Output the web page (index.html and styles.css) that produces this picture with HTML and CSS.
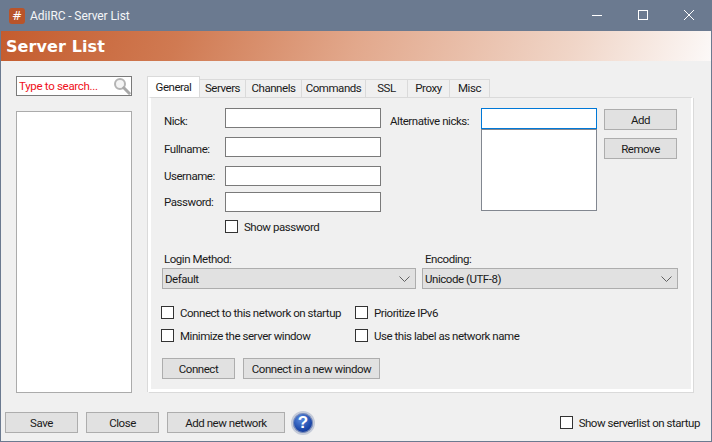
FILE: index.html
```html
<!DOCTYPE html>
<html lang="en">
<head>
<meta charset="utf-8">
<title>AdiIRC - Server List</title>
<link rel="stylesheet" href="styles.css">
</head>
<body>
<div class="window">
  <header class="titlebar">
    <span class="app-icon">#</span>
    <span class="title">AdiIRC - Server List</span>
    <div class="controls">
      <svg class="ctl" width="46" height="31" viewBox="0 0 46 31"><path d="M18 15.5h10" stroke="#fff" fill="none"/></svg>
      <svg class="ctl" width="46" height="31" viewBox="0 0 46 31"><rect x="18.5" y="10.5" width="9" height="9" stroke="#fff" fill="none"/></svg>
      <svg class="ctl" width="46" height="31" viewBox="0 0 46 31"><path d="M18 10l10 10M28 10L18 20" stroke="#fff" fill="none"/></svg>
    </div>
  </header>
  <div class="banner">Server List</div>
  <main class="content">
    <div class="main-row">
      <aside class="sidebar">
        <div class="search">
          <span class="search-text">Type to search...</span>
          <svg width="18" height="18" viewBox="0 0 18 18"><circle cx="7" cy="7" r="5" fill="#f4f4f4" stroke="#b4b4b4" stroke-width="2"/><path d="M10.8 10.8l5.4 5.4" stroke="#a8a8a8" stroke-width="3" stroke-linecap="round"/></svg>
        </div>
        <div class="network-list"></div>
      </aside>
      <section class="tabs">
        <nav class="tabstrip">
          <span class="tab active">General</span>
          <span class="tab t-servers">Servers</span>
          <span class="tab t-channels">Channels</span>
          <span class="tab t-commands">Commands</span>
          <span class="tab t-ssl">SSL</span>
          <span class="tab t-proxy">Proxy</span>
          <span class="tab t-misc">Misc</span>
        </nav>
        <div class="panel">
          <div class="top-grid">
            <label class="lbl l1">Nick:</label>
            <input class="field f1" type="text">
            <label class="lbl l2">Fullname:</label>
            <input class="field f2" type="text">
            <label class="lbl l3">Username:</label>
            <input class="field f3" type="text">
            <label class="lbl l4">Password:</label>
            <input class="field f4" type="text">
            <label class="check c5"><span class="box"></span>Show password</label>
            <label class="lbl alt-label">Alternative nicks:</label>
            <div class="alt">
              <div class="alt-input"></div>
              <div class="alt-list"></div>
            </div>
            <div class="alt-buttons">
              <button class="btn btn-add">Add</button>
              <button class="btn btn-add">Remove</button>
            </div>
          </div>
          <div class="selects">
            <div class="select-col col-login">
              <label class="lbl">Login Method:</label>
              <div class="select"><span>Default</span>
                <svg width="11" height="6" viewBox="0 0 11 6"><path d="M.5.5l5 5 5-5" stroke="#606060" fill="none"/></svg>
              </div>
            </div>
            <div class="select-col col-enc">
              <label class="lbl">Encoding:</label>
              <div class="select"><span>Unicode (UTF-8)</span>
                <svg width="11" height="6" viewBox="0 0 11 6"><path d="M.5.5l5 5 5-5" stroke="#606060" fill="none"/></svg>
              </div>
            </div>
          </div>
          <div class="options">
            <label class="check"><span class="box"></span>Connect to this network on startup</label>
            <label class="check"><span class="box"></span>Prioritize IPv6</label>
            <label class="check"><span class="box"></span>Minimize the server window</label>
            <label class="check"><span class="box"></span>Use this label as network name</label>
          </div>
          <div class="panel-actions">
            <button class="btn w73">Connect</button>
            <button class="btn w137">Connect in a new window</button>
          </div>
        </div>
      </section>
    </div>
    <footer class="footer">
      <button class="btn w73">Save</button>
      <button class="btn w73">Close</button>
      <button class="btn w118">Add new network</button>
      <span class="help"><span class="help-mark">?</span></span>
      <label class="check startup"><span class="box"></span>Show serverlist on startup</label>
    </footer>
  </main>
</div>
</body>
</html>
```

FILE: styles.css
```css
* { box-sizing: border-box; }
html, body { margin: 0; padding: 0; }
body {
  width: 712px;
  height: 442px;
  overflow: hidden;
  font-family: Roboto, "Noto Sans", sans-serif;
  font-size: 11.5px;
  letter-spacing: -0.46px;
  color: #1a1a1a;
  background: #f0f0f0;
}
.window {
  width: 712px;
  height: 442px;
  display: flex;
  flex-direction: column;
  border: 1px solid #6b7a90;
  border-top: 0;
}
.titlebar {
  height: 31px;
  margin: 0 -1px;
  flex: none;
  background: #6b7a90;
  display: flex;
  align-items: center;
  color: #fff;
  padding-left: 9px;
}
.app-icon {
  width: 16px;
  height: 16px;
  border-radius: 3px;
  background: #b9542a;
  color: #fff;
  font: 12px/16px "DejaVu Sans", sans-serif;
  letter-spacing: 0;
  text-align: center;
}
.title {
  margin-left: 5px;
  font-size: 12px;
  letter-spacing: -0.1px;
  color: #f4f6f8;
}
.controls { margin-left: auto; display: flex; }
.ctl { display: block; }
.banner {
  height: 30px;
  flex: none;
  padding: 1px 0 0 5px;
  font: bold 16px/30px "DejaVu Sans", sans-serif;
  letter-spacing: 0.1px;
  color: #fff;
  background: linear-gradient(110deg, #c45c2e 0%, #d07a52 25%, #e2a88c 50%, #f0d5c7 80%, #fcf9f8 100%);
}
.content { flex: 1; display: flex; flex-direction: column; min-height: 0; }
.main-row { display: flex; height: 332px; padding: 15px 0 0 15px; }
.sidebar { width: 116px; flex: none; margin-right: 15px; }
.search {
  height: 20px;
  border: 1px solid #7a7a7a;
  background: #fff;
  display: flex;
  align-items: center;
  justify-content: space-between;
  padding: 0 0 0 2px;
  color: #f01020;
  letter-spacing: -0.3px;
}
.network-list {
  margin-top: 15px;
  height: 282px;
  background: #fff;
  border: 1px solid #ababab;
}
.tabs { width: 547px; flex: none; }
.tabstrip { display: flex; height: 21px; align-items: flex-end; }
.tab {
  height: 18px;
  border: 1px solid #dadada;
  border-left: 0;
  border-bottom: 0;
  background: #f0f0f0;
  text-align: center;
  line-height: 17px;
  white-space: nowrap;
}
.tab.active {
  width: 53px;
  height: 21px;
  border: 1px solid #dadada;
  border-bottom: 0;
  background: #fff;
  line-height: 20px;
}
.t-servers { width: 46px; }
.t-channels { width: 56px; }
.t-commands { width: 64px; }
.t-ssl { width: 42px; }
.t-proxy { width: 42px; }
.t-misc { width: 40px; }
.panel {
  height: 295px;
  width: 545px;
  margin-left: 1px;
  border-top: 1px solid #dadada;
  border-left: 3px solid #fff;
  border-bottom: 3px solid #fff;
  border-right: 2px solid #fff;
  box-shadow: 1px 1px 0 #dadada, -1px 0 0 #dadada;
  background: #f0f0f0;
  padding: 10px 0 0 11px;
}
.top-grid {
  display: grid;
  grid-template-columns: 63px 156px 9px 91px 116px 7px 73px;
  grid-template-rows: 29px 29px 26px 28px 13px;
  height: 125px;
}
.lbl { display: block; line-height: 20px; }
.top-grid > .lbl { padding-left: 2px; white-space: nowrap; }
.top-grid > .alt-label { padding-left: 0; }
.l1 { grid-area: 1 / 1; padding-top: 3px; }
.l2 { grid-area: 2 / 1; padding-top: 2px; }
.l3 { grid-area: 3 / 1; }
.l4 { grid-area: 4 / 1; }
.field {
  height: 20px;
  width: 156px;
  border: 1px solid #7a7a7a;
  background: #fff;
  padding: 0;
  margin: 0;
  display: block;
}
.f1 { grid-area: 1 / 2; }
.f2 { grid-area: 2 / 2; }
.f3 { grid-area: 3 / 2; }
.f4 { grid-area: 4 / 2; }
.c5 { grid-area: 5 / 2; }
.alt-label { grid-area: 1 / 4; padding-top: 3px; }
.alt { grid-area: 1 / 5 / 6 / 6; height: 103px; }
.alt-input { height: 21px; border: 1px solid #0078d7; background: #fff; }
.alt-list { height: 82px; border: 1px solid #828790; background: #fff; }
.alt-buttons { grid-area: 1 / 7 / 6 / 8; padding-top: 1px; display: flex; flex-direction: column; gap: 8px; }
.btn {
  height: 21px;
  border: 1px solid #adadad;
  background: #e1e1e1;
  font: inherit;
  letter-spacing: inherit;
  color: inherit;
  padding: 0;
  margin: 0;
  display: block;
  flex: none;
}
.btn-add { width: 73px; }
.w73 { width: 73px; }
.w118 { width: 118px; }
.w137 { width: 137px; }
.check { display: flex; align-items: center; gap: 6px; height: 13px; line-height: 14px; white-space: nowrap; }
.box {
  width: 13px;
  height: 13px;
  border: 1px solid #333;
  background: #fff;
  flex: none;
}
.selects { display: flex; margin-top: 14px; }
.select-col { flex: none; }
.col-login { width: 260px; }
.col-enc { width: 256px; }
.select-col .lbl { height: 21px; line-height: 24px; }
.col-login .lbl { padding-left: 2px; }
.col-enc .lbl { padding-left: 3px; }
.col-login .select { width: 254px; }
.col-enc .select { width: 256px; }
.select {
  height: 21px;
  border: 1px solid #adadad;
  background: #e1e1e1;
  display: flex;
  align-items: center;
  justify-content: space-between;
  padding: 0 5px 0 2px;
}
.options {
  margin: 17px 0 0 -1px;
  display: grid;
  grid-template-columns: 194px auto;
  grid-template-rows: 13px 13px;
  row-gap: 10px;
  justify-content: start;
}
.panel-actions { display: flex; gap: 8px; margin-top: 16px; }
.footer {
  height: 48px;
  flex: none;
  display: flex;
  align-items: flex-start;
  gap: 8px;
  padding: 19px 11px 0 4px;
}
.help {
  width: 24px;
  height: 24px;
  border-radius: 50%;
  border: 2px solid #c4cad8;
  box-shadow: 0 0 0 1px #7d8eb8 inset;
  background: radial-gradient(circle at 40% 30%, #5b8ce0, #1b46a8 60%, #0f2f86);
  color: #fff;
  margin: -1px 0 0 -2px;
  display: flex;
  align-items: center;
  justify-content: center;
}
.help-mark { font: bold 17px/20px "Liberation Sans", sans-serif; letter-spacing: 0; }
.startup { margin: 4px 0 0 auto; }
```
